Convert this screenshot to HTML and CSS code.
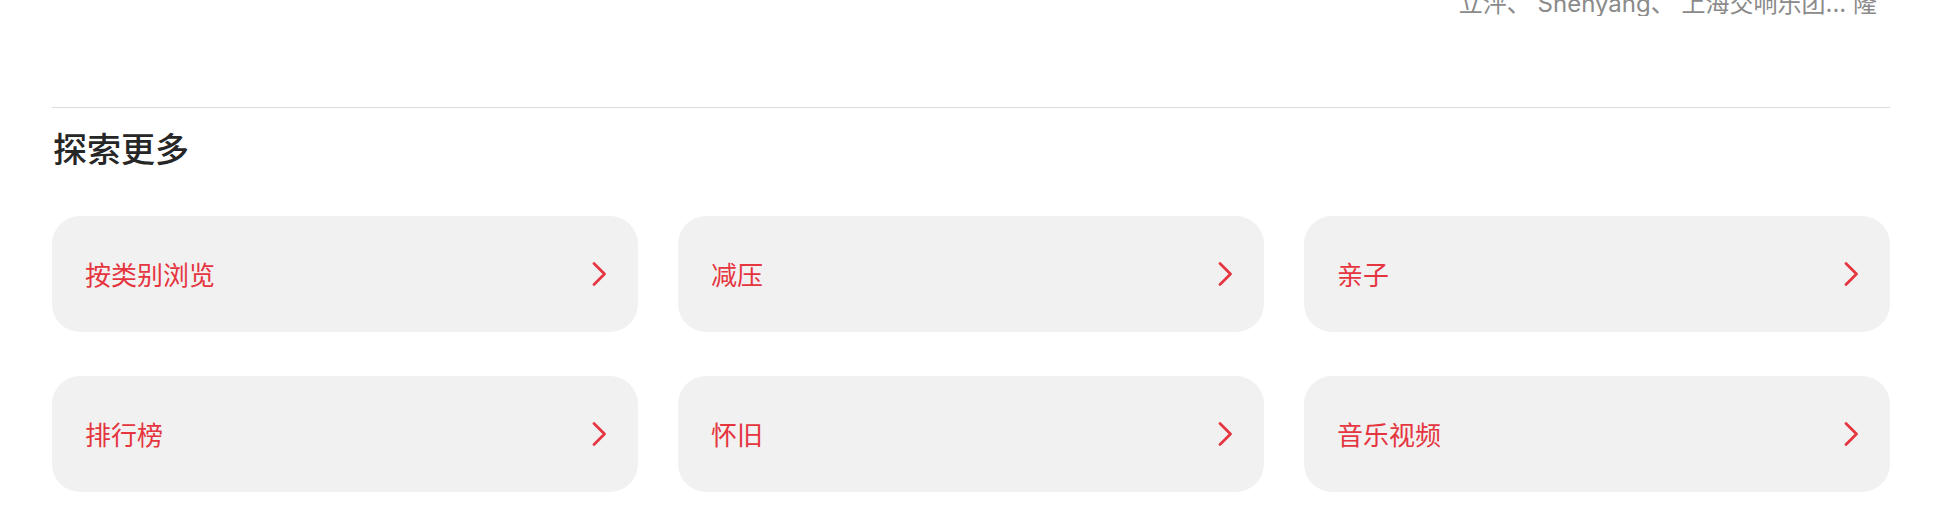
FILE: index.html
```html
<!DOCTYPE html>
<html lang="zh-CN">
<head>
<meta charset="utf-8">
<title>探索更多</title>
<link rel="stylesheet" href="styles.css">
</head>
<body>
<div class="page">
  <div class="top-line"><span class="top-text">立泙、 Shenyang、 上海交响乐团... 隆</span></div>
  <hr class="rule">
  <h2 class="heading">探索更多</h2>
  <div class="grid">
    <a class="card" href="#"><span class="label">按类别浏览</span><svg class="chev" viewBox="0 0 14 24" width="14" height="24"><polyline points="2,1.5 12.5,12 2,22.5"/></svg></a>
    <a class="card" href="#"><span class="label">减压</span><svg class="chev" viewBox="0 0 14 24" width="14" height="24"><polyline points="2,1.5 12.5,12 2,22.5"/></svg></a>
    <a class="card" href="#"><span class="label">亲子</span><svg class="chev" viewBox="0 0 14 24" width="14" height="24"><polyline points="2,1.5 12.5,12 2,22.5"/></svg></a>
    <a class="card" href="#"><span class="label">排行榜</span><svg class="chev" viewBox="0 0 14 24" width="14" height="24"><polyline points="2,1.5 12.5,12 2,22.5"/></svg></a>
    <a class="card" href="#"><span class="label">怀旧</span><svg class="chev" viewBox="0 0 14 24" width="14" height="24"><polyline points="2,1.5 12.5,12 2,22.5"/></svg></a>
    <a class="card" href="#"><span class="label">音乐视频</span><svg class="chev" viewBox="0 0 14 24" width="14" height="24"><polyline points="2,1.5 12.5,12 2,22.5"/></svg></a>
  </div>
</div>
</body>
</html>
```

FILE: styles.css
```css
html, body {
  margin: 0;
  padding: 0;
  background: #ffffff;
}
body {
  font-family: "Noto Sans CJK SC", "Noto Sans", sans-serif;
}
.page {
  padding: 0 48px 0 52px;
}
.top-line {
  height: 16px;
  overflow: hidden;
  display: flex;
  justify-content: flex-end;
  align-items: flex-end;
  padding-right: 13px;
}
.top-text {
  font-family: "Inter", "Noto Sans CJK SC", sans-serif;
  font-size: 24px;
  line-height: 24px;
  color: #8a8a8a;
  white-space: nowrap;
}
.rule {
  margin: 91px 0 0 0;
  border: 0;
  border-top: 1px solid #dcdcdc;
  height: 0;
}
.heading {
  margin: 18px 0 0 1px;
  font-size: 34px;
  line-height: 44px;
  font-weight: 500;
  color: #262626;
}
.grid {
  margin-top: 46px;
  display: grid;
  grid-template-columns: repeat(3, 1fr);
  column-gap: 40px;
  row-gap: 44px;
}
.card {
  height: 116px;
  box-sizing: border-box;
  background: #f1f1f1;
  border-radius: 28px;
  display: flex;
  align-items: center;
  justify-content: space-between;
  padding: 0 32px 0 33px;
  text-decoration: none;
}
.label {
  font-size: 26px;
  line-height: 30px;
  color: #e5353f;
}
.chev {
  display: block;
  fill: none;
  stroke: #e5353f;
  stroke-width: 2.7;
  stroke-linecap: round;
  stroke-linejoin: round;
}
```
